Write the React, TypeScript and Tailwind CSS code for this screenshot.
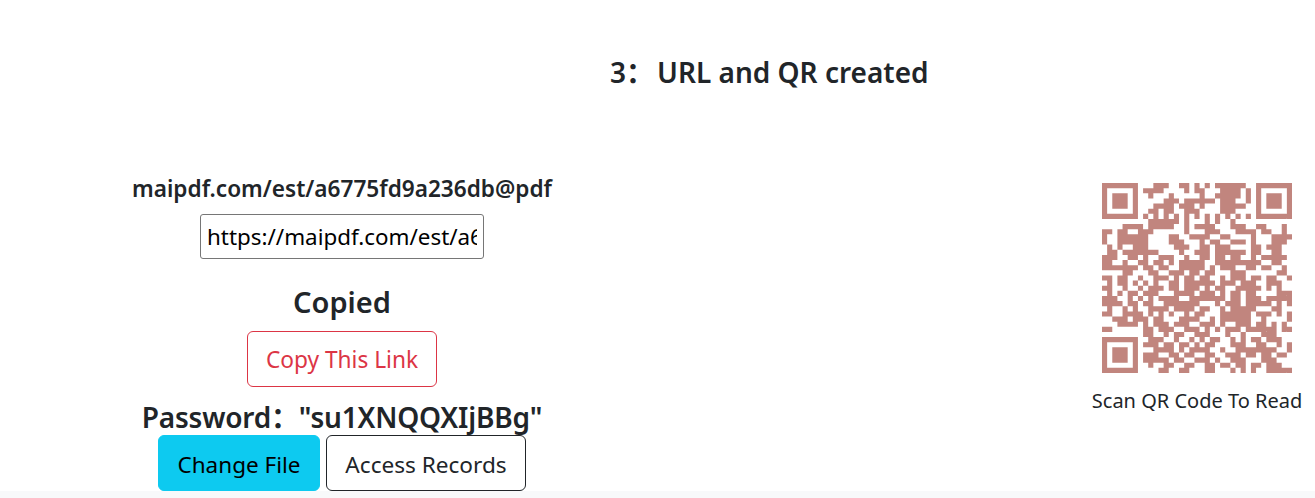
const qrRows = [
  '1111111000111001101010111111001111111',
  '1000001011110000101100011110101000001',
  '1011101001000100000100111110101011101',
  '1011101000001110111111011100101011101',
  '1011101000111101110100011111001011101',
  '1000001001101100111000011100001000001',
  '1111111010101010101010101010101111111',
  '0000000001111110100010100100000000000',
  '0000111101111100101111000111001100010',
  '1101100111000000100011100011110110010',
  '1001111110000110011110011000010001111',
  '1001111110000111000101100111010001110',
  '0101001110000011100110111000011011100',
  '0110111111100001001110111111011001100',
  '1110011010011100100110110110010111110',
  '1100100110110101111100111111111001100',
  '1111111011011001111101011100110110010',
  '0000110001100111011011000111000000110',
  '1101100100111010110110010111011011001',
  '0101101010100110111111011101110011100',
  '1100100101110110111010110011111010100',
  '0101011011100011110111010110110000111',
  '1110010101011110011111110110111011111',
  '1111011011001111111000101110111110101',
  '0100101001111011110110010111110001100',
  '1100111101010100101100011111101110101',
  '0011101110110001111001011111100100001',
  '0001111010111011100111010011101101010',
  '1100000011011100111010101110111111011',
  '0000000011001011001110001001000111000',
  '1111111001110010010101100101011011100',
  '1000001011101101101011000111001100101',
  '1011101000111101011110010011111111001',
  '1011101011100110110011001110110110110',
  '1011101011111011001110100111000111000',
  '1000001001001100110011011011011011100',
  '1111111000011001100011000101010011111',
]

// one path so neighbouring modules don't get seams between them
const qrPath = qrRows
  .map((row, y) =>
    row
      .split('')
      .map((cell, x) => (cell === '1' ? `M${x} ${y}h1v1h-1z` : ''))
      .join('')
  )
  .join('')

function QrCode() {
  return (
    <svg viewBox="0 0 37 37" className="w-[190px] h-[190px]" fill="#c1857e">
      <path d={qrPath} />
    </svg>
  )
}

export default function App() {
  return (
    <div className="h-[498px] overflow-hidden bg-[#f8f9fa] text-[#212529] font-['Noto_Sans','Noto_Sans_CJK_SC',sans-serif]">
      <div className="h-[491px] bg-white">
        <h3 className="pl-[610px] pt-[52px] text-[28px] leading-[40px] font-semibold whitespace-nowrap">
          3：<span className="ml-[3px]">URL and QR created</span>
        </h3>
        <div className="flex justify-between mt-[63px]">
          <div className="w-[684px] flex flex-col items-center">
            <h5 className="mt-[18px] text-[22.6px] leading-[32px] font-semibold whitespace-nowrap">
              maipdf.com/est/a6775fd9a236db@pdf
            </h5>
            <input
              readOnly
              value="https://maipdf.com/est/a6775fd9a236db@pdf"
              className="mt-[9px] w-[284px] h-[45px] px-[6px] border border-[#767676] rounded-[3px] text-[22.4px] text-black bg-white"
            />
            <h4 className="mt-[23px] text-[29px] leading-[40px] font-semibold">Copied</h4>
            <button className="mt-[9px] w-[190px] h-[56px] pt-[3px] border border-[#dc3545] rounded-[6px] text-[#dc3545] text-[22.7px]">
              Copy This Link
            </button>
            <h4 className="mt-[10px] text-[28px] leading-[40px] font-semibold whitespace-nowrap tracking-[-0.2px]">
              Password："su1XNQQXIjBBg"
            </h4>
            <div className="flex gap-[6px] -mt-[2px]">
              <button className="w-[162px] h-[56px] pt-[3px] bg-[#0dcaf0] border border-[#0dcaf0] rounded-[6px] text-black text-[22.5px]">
                Change File
              </button>
              <button className="w-[200px] h-[56px] pt-[3px] border border-[#212529] rounded-[6px] text-[#212529] text-[22.6px]">
                Access Records
              </button>
            </div>
          </div>
          <div className="w-[236px] flex flex-col items-center pt-[28px]">
            <QrCode />
            <p className="mt-[13px] text-[20px] leading-[30px] whitespace-nowrap">Scan QR Code To Read</p>
          </div>
        </div>
      </div>
    </div>
  )
}
